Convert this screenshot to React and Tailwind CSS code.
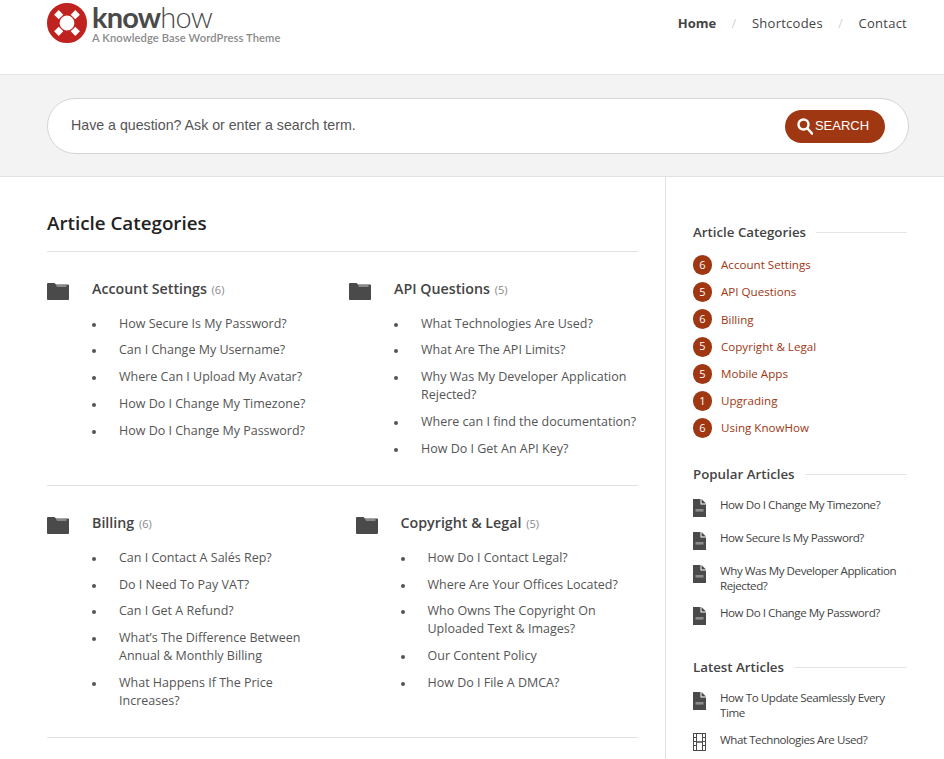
import React from 'react';

const FONT = "font-['Open_Sans',sans-serif]";

const sections = [
  [
    {
      title: 'Account Settings',
      count: 6,
      items: ['How Secure Is My Password?', 'Can I Change My Username?', 'Where Can I Upload My Avatar?', 'How Do I Change My Timezone?', 'How Do I Change My Password?'],
    },
    {
      title: 'API Questions',
      count: 5,
      items: ['What Technologies Are Used?', 'What Are The API Limits?', 'Why Was My Developer Application Rejected?', 'Where can I find the documentation?', 'How Do I Get An API Key?'],
    },
  ],
  [
    {
      title: 'Billing',
      count: 6,
      items: ['Can I Contact A Salés Rep?', 'Do I Need To Pay VAT?', 'Can I Get A Refund?', 'What’s The Difference Between Annual & Monthly Billing', 'What Happens If The Price Increases?'],
    },
    {
      title: 'Copyright & Legal',
      count: 5,
      items: ['How Do I Contact Legal?', 'Where Are Your Offices Located?', 'Who Owns The Copyright On Uploaded Text & Images?', 'Our Content Policy', 'How Do I File A DMCA?'],
    },
  ],
];

const sideCategories = [
  [6, 'Account Settings'],
  [5, 'API Questions'],
  [6, 'Billing'],
  [5, 'Copyright & Legal'],
  [5, 'Mobile Apps'],
  [1, 'Upgrading'],
  [6, 'Using KnowHow'],
];

const popular = ['How Do I Change My Timezone?', 'How Secure Is My Password?', 'Why Was My Developer Application Rejected?', 'How Do I Change My Password?'];

const Lifebuoy = () => (
  <svg width="40" height="40" viewBox="0 0 40 40" className="shrink-0">
    <circle cx="20" cy="20" r="13.7" fill="none" stroke="#c0221f" strokeWidth="12.6" />
    <g stroke="#fff" strokeWidth="6.5">
      <line x1="9.4" y1="9.4" x2="14" y2="14" />
      <line x1="30.6" y1="9.4" x2="26" y2="14" />
      <line x1="9.4" y1="30.6" x2="14" y2="26" />
      <line x1="30.6" y1="30.6" x2="26" y2="26" />
    </g>
  </svg>
);

const FolderIcon = () => (
  <svg width="22" height="17" viewBox="0 0 22 17" className="shrink-0">
    <path d="M1 0h6.5l1.5 1.5h12a1 1 0 0 1 1 1V16a1 1 0 0 1-1 1H1a1 1 0 0 1-1-1V1a1 1 0 0 1 1-1z" fill="#4a4a4a" />
    <path d="M9 2.6h10.5v.8H10z" fill="#c8c8c8" />
  </svg>
);

const DocIcon = () => (
  <svg width="13" height="18" viewBox="0 0 13 18" className="shrink-0">
    <path d="M0 0h7.5v5.5H13V18H0z" fill="#4a4a4a" />
    <path d="M8.5 0L13 4.5H8.5z" fill="#4a4a4a" />
    <rect x="2.5" y="10" width="8" height="2.6" fill="#8c8c8c" />
  </svg>
);

const FilmIcon = () => (
  <svg width="13" height="18" viewBox="0 0 13 18" className="shrink-0" fill="none" stroke="#4a4a4a">
    <rect x="0.5" y="0.5" width="12" height="17" />
    <rect x="3.5" y="0.5" width="6" height="8.5" />
    <rect x="3.5" y="9" width="6" height="8.5" />
    <path d="M0.5 4.5h3M0.5 8.5h3M0.5 12.5h3M9.5 4.5h3M9.5 8.5h3M9.5 12.5h3" />
  </svg>
);

const Category = ({ cat }) => (
  <div className="flex">
    <div className="w-[45px] shrink-0 pt-[4px]">
      <FolderIcon />
    </div>
    <div className="flex-1">
      <h3 className="text-[14.25px] leading-[20px] font-semibold text-[#444]">
        {cat.title} <span className="text-[11px] font-normal text-[#888] ml-[1px]">({cat.count})</span>
      </h3>
      <ul className="mt-[14.6px] flex flex-col gap-[8.8px]">
        {cat.items.map((item) => (
          <li key={item} className="relative pl-[27px] text-[12.5px] leading-[18px] text-[#555]">
            <span className="absolute left-[0px] top-[8px] w-[4px] h-[4px] rounded-full bg-[#555]" />
            {item}
          </li>
        ))}
      </ul>
    </div>
  </div>
);

const SideHeading = ({ children }) => (
  <div className="flex items-center gap-[10px]">
    <h4 className="text-[13.3px] leading-[18px] font-semibold text-[#444] whitespace-nowrap">{children}</h4>
    <div className="flex-1 h-px bg-[#e4e4e4]" />
  </div>
);

const SideArticle = ({ text, film }) => (
  <li className="flex gap-[14px] min-h-[21px] text-[11.6px] leading-[15px] tracking-[-0.45px] text-[#444]">
    <div className={film ? 'pt-[0.5px]' : 'pt-[1.5px]'}>{film ? <FilmIcon /> : <DocIcon />}</div>
    <span className="flex-1">{text}</span>
  </li>
);

export default function App() {
  return (
    <div className={`h-[759px] overflow-hidden bg-white ${FONT}`}>
      {/* header */}
      <header className="h-[75px] border-b border-[#e6e6e6] flex justify-between pl-[47px] pr-[37px]">
        <div className="flex items-start pt-[3px] gap-[5px]">
          <Lifebuoy />
          <div className="mt-[1px]">
            <div className="text-[29px] leading-[26px] tracking-[-0.8px] text-[#4a4a4a] font-['Lato',sans-serif]">
              <span className="font-bold">know</span>
              <span className="font-light">how</span>
            </div>
            <div className="mt-[1px] text-[11.2px] leading-[13px] font-semibold text-[#8a8a8a] font-['Lato',sans-serif] tracking-[0.1px]">A Knowledge Base WordPress Theme</div>
          </div>
        </div>
        <nav className="flex items-start pt-[14px] text-[13px] leading-[18px] text-[#444] tracking-[0.25px]">
          <a className="font-bold tracking-[0px]">Home</a>
          <span className="mx-[15.5px] text-[#bbb] text-[13px] font-light">/</span>
          <a>Shortcodes</a>
          <span className="mx-[15.5px] text-[#bbb] text-[13px] font-light">/</span>
          <a>Contact</a>
        </nav>
      </header>

      {/* search */}
      <div className="h-[102px] bg-[#f3f3f3] border-b border-[#e2e2e2] pt-[23px] pl-[47px] pr-[35px]">
        <div className="h-[56px] rounded-[28px] bg-white border border-[#d4d4d4] flex items-center justify-between pl-[23px] pr-[23px] font-['Liberation_Sans',sans-serif]">
          <span className="text-[14.2px] text-[#555] pb-[1px]">Have a question? Ask or enter a search term.</span>
          <button className="w-[100px] h-[33px] rounded-[17px] bg-[#a03713] text-white text-[13px] flex items-center justify-center gap-[2px] pr-[4px]">
            <svg width="16" height="17" viewBox="0 0 16 17" fill="none" stroke="#fff">
              <circle cx="6.5" cy="6.5" r="5" strokeWidth="2.4" />
              <path d="M10.5 10.5l4.5 5" strokeWidth="2.6" strokeLinecap="round" />
            </svg>
            SEARCH
          </button>
        </div>
      </div>

      <div className="flex h-[582px]">
        {/* main */}
        <main className="w-[666px] shrink-0 border-r border-[#e2e2e2] pl-[47px] pr-[27px] pt-[32px]">
          <h1 className="text-[18.8px] leading-[28px] font-semibold text-[#222] pb-[14px] border-b border-[#e2e2e2]">Article Categories</h1>
          <div className="pt-[27px] pb-[27.4px] border-b border-[#e2e2e2] grid grid-cols-[302px_1fr]">
            <Category cat={sections[0][0]} />
            <Category cat={sections[0][1]} />
          </div>
          <div className="pt-[27px] pb-[27.4px] border-b border-[#e2e2e2] grid grid-cols-[308.5px_1fr]">
            <div className="pr-[28px]">
              <Category cat={sections[1][0]} />
            </div>
            <Category cat={sections[1][1]} />
          </div>
        </main>

        {/* sidebar */}
        <aside className="flex-1 pl-[27px] pr-[37px] pt-[46px]">
          <SideHeading>Article Categories</SideHeading>
          <ul className="mt-[14px] flex flex-col gap-[7.2px]">
            {sideCategories.map(([n, name]) => (
              <li key={name} className="flex items-center gap-[9px] h-[20px] text-[11.6px] text-[#a03713]">
                <span className="w-[19px] h-[20px] rounded-full bg-[#a03713] text-white text-[11px] flex items-center justify-center">{n}</span>
                {name}
              </li>
            ))}
          </ul>

          <div className="mt-[27px]">
            <SideHeading>Popular Articles</SideHeading>
          </div>
          <ul className="mt-[14px] flex flex-col gap-[12px]">
            {popular.map((p) => (
              <SideArticle key={p} text={p} />
            ))}
          </ul>

          <div className="mt-[32px]">
            <SideHeading>Latest Articles</SideHeading>
          </div>
          <ul className="mt-[14px] flex flex-col gap-[12px]">
            <SideArticle text="How To Update Seamlessly Every Time" />
            <SideArticle text="What Technologies Are Used?" film />
          </ul>
        </aside>
      </div>
    </div>
  );
}
